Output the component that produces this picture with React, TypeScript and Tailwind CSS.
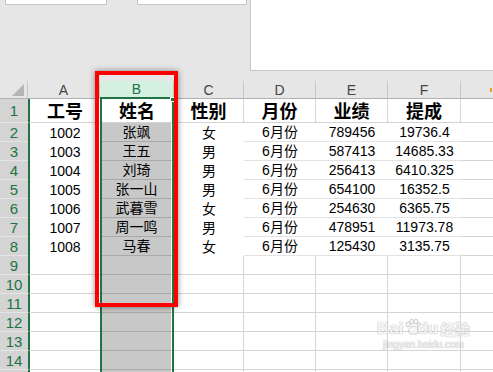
import React from "react";

const FONT = "font-['Liberation_Sans','Noto_Sans_CJK_SC',sans-serif]";

const rows: string[][] = [
  ["工号", "姓名", "性别", "月份", "业绩", "提成"],
  ["1002", "张飒", "女", "6月份", "789456", "19736.4"],
  ["1003", "王五", "男", "6月份", "587413", "14685.33"],
  ["1004", "刘琦", "男", "6月份", "256413", "6410.325"],
  ["1005", "张一山", "男", "6月份", "654100", "16352.5"],
  ["1006", "武暮雪", "女", "6月份", "254630", "6365.75"],
  ["1007", "周一鸣", "男", "6月份", "478951", "11973.78"],
  ["1008", "马春", "女", "6月份", "125430", "3135.75"],
];

const total = 14;

function RowHeader({ n, h }: { n: number; h: string }) {
  return (
    <div
      className={`${h} w-[28px] shrink-0 flex items-center justify-center bg-[#d4d4d4] border-b border-[#e4e4e4] text-[15px] leading-none text-[#217346]`}
    >
      {n}
    </div>
  );
}

function Row({ idx }: { idx: number }) {
  const n = idx + 1;
  const isHead = idx === 0;
  const hasData = idx < rows.length;
  const d = hasData ? rows[idx] : ["", "", "", "", "", ""];
  const h = isHead ? "h-[24px]" : "h-[19px]";
  const txt = isHead ? "text-[18px] font-bold pt-[2px]" : "text-[14px]";
  const dataRow = hasData && !isHead;

  const cellBase = `${h} shrink-0 flex items-center justify-center leading-none text-black ${txt}`;

  return (
    <div className="flex">
      <RowHeader n={n} h={h} />
      {/* A */}
      <div
        className={`${cellBase} w-[72px] bg-white border-l-2 border-l-[#217346] ${
          dataRow ? "" : "border-b border-b-[#d4d4d4]"
        }`}
      >
        {d[0]}
      </div>
      {/* B */}
      <div className={`${h} w-[74px] shrink-0 flex border-l-2 border-r-2 border-[#217346]`}>
        {isHead ? (
          <div className="relative flex-1 flex items-center justify-center pt-[2px] bg-white border-b border-[#d4d4d4] text-[18px] font-bold leading-none text-black">
            {d[1]}
            <div className="absolute right-[-3px] top-[-2px] w-[5px] h-[5px] bg-[#217346] border border-white" />
          </div>
        ) : (
          <div className="flex-1 flex items-center justify-center bg-[#c8c8c8] border-b border-[#a9a9a9] border-r border-r-white text-[14px] leading-none text-black">
            {d[1]}
          </div>
        )}
      </div>
      {/* C */}
      <div
        className={`${cellBase} w-[70px] bg-white ${
          dataRow ? "" : "border-b border-r border-[#d4d4d4]"
        }`}
      >
        {d[2]}
      </div>
      {/* D */}
      <div
        className={`${cellBase} w-[72px] bg-white ${
          dataRow ? "border-b border-[#e2e2e2]" : "border-b border-r border-[#d4d4d4]"
        }`}
      >
        {d[3]}
      </div>
      {/* E */}
      <div
        className={`${cellBase} w-[72px] bg-white ${
          dataRow ? "border-b border-[#e2e2e2]" : "border-b border-r border-[#d4d4d4]"
        }`}
      >
        {d[4]}
      </div>
      {/* F */}
      <div
        className={`${cellBase} w-[73px] bg-white ${
          dataRow ? "border-b border-[#e2e2e2]" : "border-b border-r border-[#d4d4d4]"
        }`}
      >
        {d[5]}
      </div>
      {/* G */}
      <div className={`${h} flex-1 bg-white border-b border-[#d4d4d4]`} />
    </div>
  );
}

function ColHeader() {
  const letters: { l: string; w: string }[] = [
    { l: "A", w: "w-[72px]" },
    { l: "B", w: "w-[74px]" },
    { l: "C", w: "w-[70px]" },
    { l: "D", w: "w-[72px]" },
    { l: "E", w: "w-[72px]" },
    { l: "F", w: "w-[73px]" },
  ];
  return (
    <div className="flex h-[18px] bg-[#e6e6e6]">
      <div className="w-[28px] h-[18px] shrink-0 flex items-end justify-end pr-[3px] pb-[2px] border-r border-[#c8c8c8] border-b border-b-[#b0b0b0]">
        <svg width="12" height="12" viewBox="0 0 12 12">
          <polygon points="12,0 12,12 0,12" fill="#b4b4b4" />
        </svg>
      </div>
      {letters.map((c) =>
        c.l === "B" ? (
          <div
            key={c.l}
            className={`${c.w} h-[18px] shrink-0 flex items-end justify-center pb-[1px] bg-[#d3f0e0] border-r border-[#b8c8bd] border-b-2 border-b-[#217346] text-[14px] leading-none text-[#217346]`}
          >
            {c.l}
          </div>
        ) : (
          <div
            key={c.l}
            className={`${c.w} h-[18px] shrink-0 flex items-end justify-center pb-[1px] border-r border-[#c8c8c8] border-b border-b-[#b0b0b0] text-[14px] leading-none text-[#444444]`}
          >
            {c.l}
          </div>
        )
      )}
      <div className="relative flex-1 h-[18px] border-b border-[#b0b0b0]">
        <div className="absolute right-[1px] top-[7px] w-[2px] h-[4px] bg-[#e8a020]" />
      </div>
    </div>
  );
}

export default function App() {
  return (
    <div className={`relative w-[493px] h-[372px] overflow-hidden bg-[#e6e6e6] ${FONT}`}>
      {/* top area */}
      <div className="flex items-start h-[81px]">
        <div className="ml-[5px] w-[102px] h-[5px] bg-white border border-t-0 border-[#c6c6c6]" />
        <div className="ml-[30px] w-[110px] h-[5px] bg-white border border-t-0 border-[#c6c6c6]" />
        <div className="ml-[3px] w-[243px] h-[71px] bg-white border-l border-b border-[#c6c6c6]" />
      </div>
      <ColHeader />
      <div className="flex flex-col">
        {Array.from({ length: total }).map((_, i) => (
          <Row key={i} idx={i} />
        ))}
        {/* sliver of row 15 */}
        <div className="flex h-[4px]">
          <div className="w-[28px] shrink-0 bg-[#d4d4d4]" />
          <div className="w-[72px] shrink-0 bg-white border-l-2 border-[#217346]" />
          <div className="w-[74px] shrink-0 flex border-l-2 border-r-2 border-[#217346]">
            <div className="flex-1 bg-[#c8c8c8] border-r border-white" />
          </div>
          <div className="w-[70px] shrink-0 bg-white border-r border-[#d4d4d4]" />
          <div className="w-[72px] shrink-0 bg-white border-r border-[#d4d4d4]" />
          <div className="w-[72px] shrink-0 bg-white border-r border-[#d4d4d4]" />
          <div className="w-[73px] shrink-0 bg-white border-r border-[#d4d4d4]" />
          <div className="flex-1 bg-white" />
        </div>
      </div>

      {/* red highlight */}
      <div className="absolute left-[95px] top-[71px] w-[83px] h-[236px] border-4 border-[#ff0000] shadow-[0_0_6px_rgba(0,0,0,0.45)]" />

      {/* watermark */}
      <div className="absolute left-[377px] top-[318px] flex flex-col items-center opacity-70 select-none whitespace-nowrap">
        <div className="flex items-end text-[17px] font-bold leading-none text-[#f4f4f4] [text-shadow:0_0_1px_#9a9a9a,0_0_1px_#9a9a9a]">
          <span>Bai</span>
          <svg width="18" height="18" viewBox="0 0 22 22" className="mx-[1px] mb-[1px]">
            <g fill="#f4f4f4" stroke="#a0a0a0" strokeWidth="0.9">
              <ellipse cx="5" cy="8" rx="2.4" ry="3" />
              <ellipse cx="9.5" cy="4.5" rx="2.4" ry="3" />
              <ellipse cx="14.5" cy="4.5" rx="2.4" ry="3" />
              <ellipse cx="18.5" cy="8.5" rx="2.4" ry="3" />
              <path d="M11.5 10 C7 10 5 15 6 18 C7 21 10 19.5 11.5 19.5 C13 19.5 16 21 17 18 C18 15 16 10 11.5 10 Z" />
            </g>
          </svg>
          <span className="-ml-[6px]">du</span>
          <span className="ml-[2px] text-[15px]">经验</span>
        </div>
        <div className="mt-[3px] text-[10px] leading-none text-[#f0f0f0] [text-shadow:0_0_1px_#a0a0a0,0_0_1px_#a0a0a0]">
          jingyan.baidu.com
        </div>
      </div>
    </div>
  );
}
